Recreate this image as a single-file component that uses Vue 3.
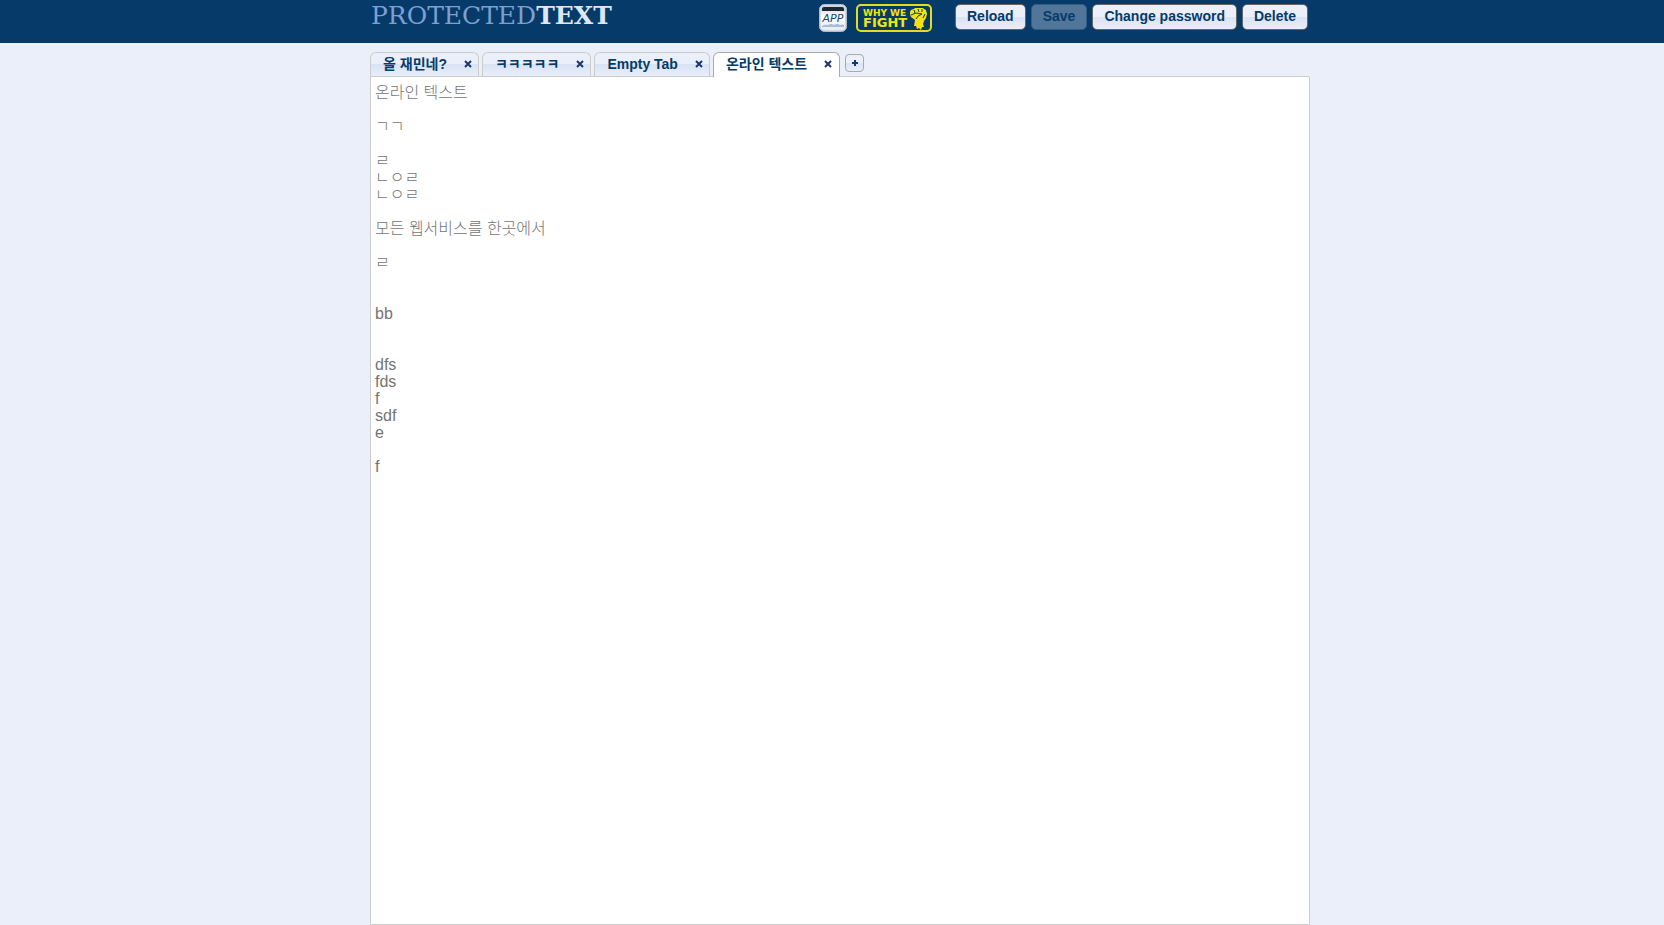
<template>
  <div class="page">
    <header class="topbar">
      <div class="inner topbar-inner">
        <a class="logo" href="#">PROTECTED<b>TEXT</b></a>
        <nav class="badges">
          <a href="#" aria-label="App">
            <svg width="28" height="28" viewBox="0 0 28 28">
              <defs>
                <linearGradient id="appBg" x1="0" y1="0" x2="0" y2="1">
                  <stop offset="0" stop-color="#e3e6ea" />
                  <stop offset="0.3" stop-color="#ffffff" />
                  <stop offset="1" stop-color="#e4eaf4" />
                </linearGradient>
              </defs>
              <rect x="0.5" y="0.5" width="27" height="27" rx="5" fill="#d3d7dd" stroke="#b4bcc8" />
              <path d="M3 7V5a2 2 0 0 1 2-2h18a2 2 0 0 1 2 2v2z" fill="#1d2836" />
              <path d="M2 7h24v16a3 3 0 0 1-3 3H5a3 3 0 0 1-3-3z" fill="url(#appBg)" />
              <path d="M3 22q3-2 6-1q3-2 6 0q3-2 6 0q3-1 4 0v2H3z" fill="#a9bbd6" />
              <text x="14" y="18" class="app-text">APP</text>
            </svg>
          </a>
          <a href="#" aria-label="Why we fight">
            <svg width="76" height="28" viewBox="0 0 76 28">
              <rect x="1" y="1" width="74" height="26" rx="4" fill="#063b69" stroke="#e4dc1c" stroke-width="2" />
              <text x="7" y="12" class="why-text">WHY WE</text>
              <text x="7" y="23" class="fight-text">FIGHT</text>
              <path
                d="M54 8l1-2l3-1l1-1l3 0l2 0l3 0l1 1l2 1l1 4l-1 4l-2 3l-1 3l1 3l-2 0l-1 3l-2-2l-2 1l-1-3l-2 0l1-6l-4-3l-1-3z"
                fill="#f3e40e"
              />
              <path d="M58 6l1 3M62 5l1 3M66 5l0 3M55 11l5-2l6 1l-4 2l-2 3M69 10l-2 4" class="fist-line" />
            </svg>
          </a>
        </nav>
        <div class="actions">
          <button v-for="a in actions" :key="a.label" type="button" class="btn" :disabled="a.disabled">
            {{ a.label }}
          </button>
        </div>
      </div>
    </header>

    <main class="editor">
      <div class="inner editor-inner">
        <div class="tabs">
          <div v-for="(tab, i) in tabs" :key="i" class="tab" :class="{ active: i === current }">
            <button type="button" class="tab-title" @click="current = i">{{ tab.title }}</button>
            <button type="button" class="tab-close" aria-label="Close tab" @click="closeTab(i)">
              <svg width="8" height="8" viewBox="0 0 8 8"><path d="M1 1l6 6M7 1l-6 6" /></svg>
            </button>
          </div>
          <button type="button" class="add" aria-label="New tab" @click="addTab">
            <svg width="6" height="6" viewBox="0 0 6 6"><path d="M3 0v6M0 3h6" /></svg>
          </button>
        </div>
        <textarea v-model="tabs[current].text" class="content" aria-label="Text" spellcheck="false"></textarea>
      </div>
    </main>
  </div>
</template>

<script setup>
import { ref } from 'vue';

const actions = [
  { label: 'Reload', disabled: false },
  { label: 'Save', disabled: true },
  { label: 'Change password', disabled: false },
  { label: 'Delete', disabled: false },
];

const lines = [
  '온라인 텍스트', '', 'ㄱㄱ', '', 'ㄹ', 'ㄴㅇㄹ', 'ㄴㅇㄹ', '',
  '모든 웹서비스를 한곳에서', '', 'ㄹ', '', '', 'bb', '', '',
  'dfs', 'fds', 'f', 'sdf', 'e', '', 'f',
];

const tabs = ref([
  { title: '올 재민네?', text: '' },
  { title: 'ㅋㅋㅋㅋㅋ', text: '' },
  { title: 'Empty Tab', text: '' },
  { title: '온라인 텍스트', text: lines.join('\n') },
]);
const current = ref(3);

const addTab = () => {
  tabs.value.push({ title: 'Empty Tab', text: '' });
  current.value = tabs.value.length - 1;
};

const closeTab = (i) => {
  if (tabs.value.length === 1) return;
  tabs.value.splice(i, 1);
  if (current.value >= i && current.value > 0) current.value--;
};
</script>

<style>
body {
  background: #ebeffa;
}
</style>

<style scoped>
.page {
  display: flex;
  flex-direction: column;
  min-height: 100vh;
  font-family: "Liberation Sans", "Noto Sans CJK KR", sans-serif;
}

.topbar,
.editor {
  padding-left: 16px;
}

.topbar {
  background: #063b69;
}

.inner {
  width: 100%;
  max-width: 940px;
  margin: 0 auto;
  box-sizing: border-box;
}

.topbar-inner {
  display: flex;
  align-items: flex-start;
  height: 43px;
  padding: 4px 2px 0 1px;
}

.logo {
  margin-right: auto;
  font-family: "DejaVu Serif", serif;
  font-size: 25px;
  line-height: 24px;
  color: #7f9fd0;
  text-decoration: none;
}

.logo b {
  color: #dfe6f7;
}

.badges {
  display: flex;
  gap: 9px;
  margin-right: 23px;
}

.badges svg {
  display: block;
}

.app-text {
  font: italic 11px "DejaVu Sans", sans-serif;
  fill: #1c4673;
  text-anchor: middle;
}

.why-text {
  font: bold 9px "DejaVu Sans", sans-serif;
  fill: #f3e40e;
}

.fight-text {
  font: bold 13px "DejaVu Sans", sans-serif;
  fill: #f3e40e;
}

.fist-line {
  fill: none;
  stroke: #063b69;
  stroke-width: 1;
}

.actions {
  display: flex;
  gap: 5px;
}

.btn {
  height: 26px;
  padding: 0 11px 2px;
  border: 1px solid #666;
  border-radius: 5px;
  background: linear-gradient(#ebeffa 50%, #dae3f3 50%, #e8eefa);
  color: #063b69;
  font-family: inherit;
  font-size: 14px;
  font-weight: bold;
}

.btn:disabled {
  background: #517699;
  border-color: #335d84;
  color: #063b69;
}

.editor {
  flex: 1;
  display: flex;
}

.editor-inner {
  display: flex;
  flex-direction: column;
  padding-top: 9px;
}

.tabs {
  display: flex;
  align-items: flex-end;
  gap: 3px;
}

.tab {
  display: flex;
  align-items: center;
  gap: 17px;
  height: 24px;
  padding: 0 6px 2px 12px;
  box-sizing: border-box;
  border: 1px solid #ccc;
  border-bottom: 0;
  border-radius: 6px 6px 0 0;
  background: linear-gradient(#ebeffa 50%, #dae3f3 50%, #e8eefa);
}

.tab.active {
  position: relative;
  height: 25px;
  margin-bottom: -1px;
  padding-right: 7px;
  padding-bottom: 3px;
  border-color: #aaa;
  background: #fff;
}

.tab-title,
.tab-close {
  padding: 0;
  border: 0;
  background: none;
  color: #063b69;
  font-family: inherit;
  font-size: 14px;
  font-weight: bold;
  line-height: 20px;
}

.tab-close svg,
.add svg {
  display: block;
  fill: none;
  stroke: #1a3670;
  stroke-width: 2;
}

.add {
  display: flex;
  align-items: center;
  justify-content: center;
  width: 19px;
  height: 18px;
  margin: 0 0 4px 2px;
  padding: 0;
  border: 1px solid #aaa;
  border-radius: 4px;
  background: linear-gradient(#ebeffa 50%, #dae3f3 50%, #e8eefa);
}

.content {
  flex: 1;
  padding: 7px 4px;
  border: 1px solid #ccc;
  border-radius: 0 2px 2px 2px;
  outline: 0;
  resize: none;
  background: #fff;
  color: #747474;
  font-family: inherit;
  font-size: 16px;
  font-weight: 300;
  line-height: 17px;
}
</style>
